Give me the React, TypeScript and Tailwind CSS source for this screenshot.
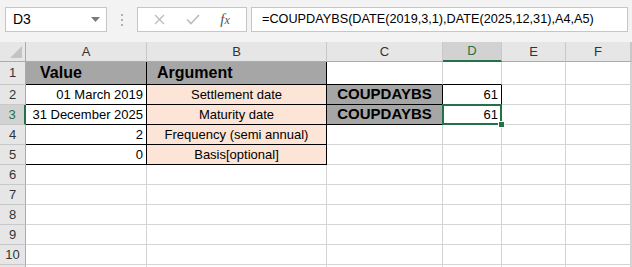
import React from "react";

const font = { fontFamily: '"Liberation Sans", Arial, sans-serif' };

type CellProps = {
  className?: string;
  children?: React.ReactNode;
};

const Cell = ({ className = "", children }: CellProps) => (
  <div
    className={`relative flex items-center border-r border-b whitespace-nowrap overflow-visible text-[13px] text-black ${className}`}
  >
    {children}
  </div>
);

const grid = "border-[#d4d4d4]";
const line = "border-black";

const ColHead = ({ label, active }: { label: string; active?: boolean }) => (
  <div
    className={`flex items-center justify-center border-r border-r-[#c8c8c8] text-[13px] ${
      active
        ? "bg-[#d2d2d2] text-[#217346] border-b-2 border-b-[#217346]"
        : "bg-[#e6e6e6] text-[#333] border-b border-b-[#ababab]"
    }`}
  >
    {label}
  </div>
);

const RowHead = ({ n, active }: { n?: number; active?: boolean }) => (
  <div
    className={`flex items-center justify-center border-b border-b-[#c8c8c8] text-[13px] ${
      active
        ? "bg-[#d2d2d2] text-[#217346] border-r-2 border-r-[#217346]"
        : "bg-[#e6e6e6] text-[#333] border-r border-r-[#ababab]"
    }`}
  >
    {n}
  </div>
);

const Empty = ({ n }: { n: number }) => (
  <>
    {Array.from({ length: n }).map((_, i) => (
      <Cell key={i} className={grid} />
    ))}
  </>
);

export default function App() {
  return (
    <div className="w-[632px] h-[267px] overflow-hidden bg-white" style={font}>
      {/* formula bar */}
      <div className="h-[42px] bg-[#f3f3f3] flex items-start pt-[7px] pl-[5px]">
        <div className="w-[102px] h-[25px] bg-white border border-[#c6c6c6] flex items-center justify-between pl-[7px] pr-[6px] text-[14px] text-black">
          <span>D3</span>
          <svg width="9" height="5" viewBox="0 0 9 5">
            <polygon points="0,0 9,0 4.5,5" fill="#7a7a7a" />
          </svg>
        </div>
        <div className="w-[30px] h-[25px] flex flex-col items-center justify-center gap-[3px]">
          <span className="w-[2px] h-[2px] bg-[#b0b0b0]" />
          <span className="w-[2px] h-[2px] bg-[#b0b0b0]" />
          <span className="w-[2px] h-[2px] bg-[#b0b0b0]" />
        </div>
        <div className="w-[110px] h-[25px] bg-white border border-[#c6c6c6] flex items-center justify-around px-[6px]">
          <svg width="11" height="11" viewBox="0 0 11 11">
            <path d="M1 1 L10 10 M10 1 L1 10" stroke="#bdbdbd" strokeWidth="1.4" />
          </svg>
          <svg width="14" height="11" viewBox="0 0 14 11">
            <path d="M1 5.5 L5 9.5 L13 1" stroke="#bdbdbd" strokeWidth="1.6" fill="none" />
          </svg>
          <span
            className="text-[15px] italic text-[#555] leading-none"
            style={{ fontFamily: '"Liberation Serif", serif' }}
          >
            f<span className="text-[12px]">x</span>
          </span>
        </div>
        <div className="ml-[4px] w-[377px] h-[25px] bg-white border border-[#c6c6c6] flex items-center pl-[10px] text-[12.7px] text-black">
          =COUPDAYBS(DATE(2019,3,1),DATE(2025,12,31),A4,A5)
        </div>
      </div>

      {/* sheet */}
      <div className="grid grid-cols-[26px_121px_180px_116px_59px_64px_65px_1fr] grid-rows-[20px_23px_repeat(10,20px)]">
        <div className="bg-[#e6e6e6] border-r border-r-[#ababab] border-b border-b-[#ababab] relative">
          <svg className="absolute right-[3px] bottom-[3px]" width="12" height="12" viewBox="0 0 12 12">
            <polygon points="12,0 12,12 0,12" fill="#c3c3c3" />
          </svg>
        </div>
        <ColHead label="A" />
        <ColHead label="B" />
        <ColHead label="C" />
        <ColHead label="D" active />
        <ColHead label="E" />
        <ColHead label="F" />
        <ColHead label="" />

        {/* row 1 */}
        <RowHead n={1} />
        <Cell className={`${line} bg-[#a6a6a6] pl-[14px] text-[16px] font-bold text-[#262626]`}>Value</Cell>
        <Cell className={`${line} bg-[#a6a6a6] pl-[10px] text-[16px] font-bold text-[#262626]`}>Argument</Cell>
        <Cell className="border-r-[#d4d4d4] border-b-black" />
        <Cell className="border-r-[#d4d4d4] border-b-black" />
        <Empty n={3} />

        {/* row 2 */}
        <RowHead n={2} />
        <Cell className={`${line} justify-end pr-[3px]`}>01 March 2019</Cell>
        <Cell className={`${line} bg-[#fce4d6] justify-center`}>Settlement date</Cell>
        <Cell className={`${line} bg-[#a6a6a6] justify-center text-[15px] font-bold text-[#262626]`}>COUPDAYBS</Cell>
        <Cell className={`${line} justify-end pr-[3px]`}>61</Cell>
        <Empty n={3} />

        {/* row 3 */}
        <RowHead n={3} active />
        <Cell className={`${line} justify-end pr-[3px]`}>31 December 2025</Cell>
        <Cell className={`${line} bg-[#fce4d6] justify-center`}>Maturity date</Cell>
        <Cell className={`${line} bg-[#a6a6a6] justify-center text-[15px] font-bold text-[#262626]`}>COUPDAYBS</Cell>
        <Cell className={`${line} justify-end pr-[3px] z-10`}>
          61
          <div className="absolute -left-px -top-px -right-px -bottom-px border-2 border-[#217346]" />
          <div className="absolute -right-[4px] -bottom-[4px] w-[7px] h-[7px] bg-[#217346] border border-white" />
        </Cell>
        <Empty n={3} />

        {/* row 4 */}
        <RowHead n={4} />
        <Cell className={`${line} justify-end pr-[3px]`}>2</Cell>
        <Cell className={`${line} bg-[#fce4d6] justify-center`}>Frequency (semi annual)</Cell>
        <Empty n={5} />

        {/* row 5 */}
        <RowHead n={5} />
        <Cell className={`${line} justify-end pr-[3px]`}>0</Cell>
        <Cell className={`${line} bg-[#fce4d6] justify-center`}>Basis[optional]</Cell>
        <Empty n={5} />

        {[6, 7, 8, 9, 10].map((n) => (
          <React.Fragment key={n}>
            <RowHead n={n} />
            <Empty n={7} />
          </React.Fragment>
        ))}
        {/* row 11, only its top edge shows */}
        <RowHead />
        <Empty n={7} />
      </div>
    </div>
  );
}
